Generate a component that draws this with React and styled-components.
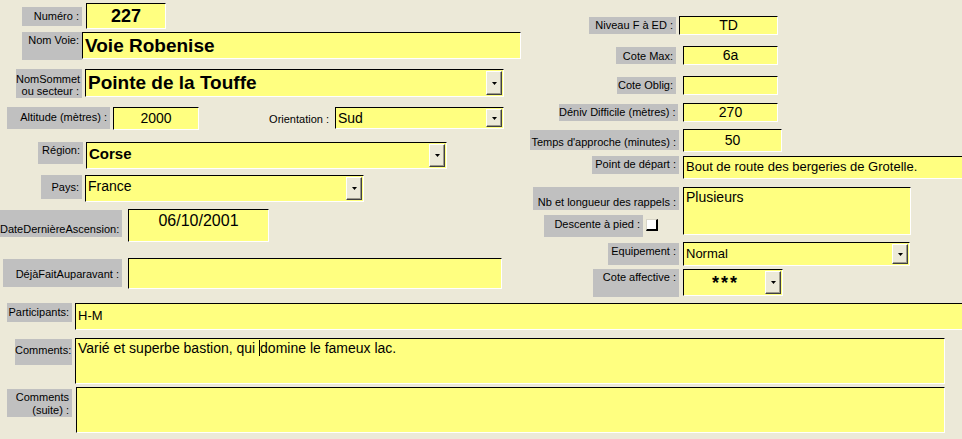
import React from 'react';
import styled, { createGlobalStyle } from 'styled-components';

const GlobalStyle = createGlobalStyle`
    body {
        margin: 0;
        background: #ece9d8;
        font-family: 'Liberation Sans', Arial, sans-serif;
    }
`;

const Form = styled.div`
    width: 962px;
    height: 439px;
    overflow: hidden;
    background: #ece9d8;
    color: #000;
`;

const Top = styled.div`
    display: flex;
    align-items: flex-start;
`;

const Column = styled.div`
    display: flex;
    flex-direction: column;
    width: ${p => p.$w}px;
    flex-shrink: 0;
`;

const Row = styled.div`
    display: flex;
    align-items: flex-start;
    margin-top: ${p => p.$mt || 0}px;
`;

const Stack = styled.div`
    display: flex;
    flex-direction: column;
    margin-left: ${p => p.$x || 0}px;
    width: ${p => p.$w}px;
    flex-shrink: 0;
`;

const Label = styled.div`
    box-sizing: border-box;
    flex-shrink: 0;
    margin-left: ${p => p.$x || 0}px;
    margin-top: ${p => p.$dy || 0}px;
    width: ${p => p.$w}px;
    height: ${p => p.$h}px;
    padding: ${p => p.$pt || 0}px 3px 0 0;
    background: #c0c0c0;
    font-size: 11px;
    line-height: ${p => p.$lh || 13}px;
    text-align: right;
    white-space: pre;
`;

const Caption = styled.div`
    flex-shrink: 0;
    margin-left: ${p => p.$x || 0}px;
    width: ${p => p.$w}px;
    height: ${p => p.$h}px;
    display: flex;
    align-items: center;
    justify-content: flex-end;
    font-size: 11px;
    white-space: nowrap;
`;

const Field = styled.div`
    box-sizing: border-box;
    flex-shrink: 0;
    display: flex;
    align-items: ${p => (p.$pt !== undefined ? 'flex-start' : 'center')};
    justify-content: ${p => (p.$center ? 'center' : 'flex-start')};
    margin-left: ${p => p.$x || 0}px;
    margin-top: ${p => p.$dy || 0}px;
    width: ${p => p.$w}px;
    height: ${p => p.$h}px;
    padding: ${p => p.$pt || 0}px ${p => (p.$combo ? 0 : 2)}px 0 2px;
    background: #ffff80;
    border-top: 1px solid #000;
    border-left: 1px solid #000;
    border-bottom: 1px solid #fff;
    border-right: 1px solid #fff;
    font-size: ${p => p.$fs || 14}px;
    font-weight: ${p => (p.$bold ? 700 : 400)};
    line-height: 1.15;
    white-space: nowrap;
    overflow: hidden;
`;

const Value = styled.span`
    flex: 1;
    text-align: ${p => (p.$center ? 'center' : 'left')};
    align-self: ${p => (p.$top ? 'flex-start' : 'center')};
    padding-top: ${p => p.$pt || 0}px;
    letter-spacing: ${p => p.$ls || 0}px;
    overflow: hidden;
`;

const DropButton = styled.div`
    box-sizing: border-box;
    align-self: stretch;
    width: 16px;
    margin: 1px 1px 1px 0;
    background: #ece9d8;
    border-top: 1px solid #fff;
    border-left: 1px solid #fff;
    border-right: 1px solid #404040;
    border-bottom: 1px solid #404040;
    box-shadow: inset -1px -1px 0 #9d9a8c;
    display: flex;
    align-items: center;
    justify-content: center;
`;

const Check = styled.div`
    box-sizing: border-box;
    flex-shrink: 0;
    width: 12px;
    height: 12px;
    margin-left: ${p => p.$x || 0}px;
    margin-top: ${p => p.$dy || 0}px;
    background: #fff;
    border-top: 1px solid #d8d5c8;
    border-left: 1px solid #d8d5c8;
    border-right: 2px solid #000;
    border-bottom: 2px solid #000;
`;

const Caret = styled.span`
    display: inline-block;
    width: 0;
    height: 16px;
    border-left: 1px solid #000;
    vertical-align: -3px;
`;

const Combo = ({ children, bold, fs, center, top, vpt, ls, ...rest }) => (
    <Field $combo {...rest}>
        <Value $center={center} $top={top} $pt={vpt} $ls={ls} style={{ fontSize: fs, fontWeight: bold ? 700 : 400 }}>
            {children}
        </Value>
        <DropButton>
            <svg width="5" height="3" viewBox="0 0 5 3">
                <polygon points="0,0 5,0 2.5,3" fill="#000" />
            </svg>
        </DropButton>
    </Field>
);

const App = () => {
    return (
        <Form>
            <GlobalStyle />
            <Top>
                <Column $w={525}>
                    <Row $mt={3}>
                        <Label $x={22} $w={60} $dy={4} $h={19} $pt={3}>Numéro :</Label>
                        <Field $x={4} $w={80} $h={26} $fs={18} $bold $center>227</Field>
                    </Row>
                    <Row $mt={3}>
                        <Label $x={22} $w={60} $h={28} $pt={2}>Nom Voie:</Label>
                        <Field $w={439} $h={27} $fs={19} $bold>Voie Robenise</Field>
                    </Row>
                    <Row $mt={9}>
                        <Label $x={16} $w={66} $h={29} $pt={4} $lh={12}>{'NomSommet\nou secteur :'}</Label>
                        <Combo $x={3} $w={419} $h={28} fs={19} bold>Pointe de la Touffe</Combo>
                    </Row>
                    <Row $mt={9}>
                        <Label $x={7} $w={103} $h={22} $pt={4}>Altitude (mètres) :</Label>
                        <Field $x={3} $w={86} $h={23} $center>2000</Field>
                        <Caption $x={66} $w={64} $h={23}>Orientation :</Caption>
                        <Combo $x={6} $w={169} $h={22} fs={14}>Sud</Combo>
                    </Row>
                    <Row $mt={12}>
                        <Label $x={38} $w={45} $h={22} $pt={2}>Région:</Label>
                        <Combo $x={3} $w={361} $h={27} fs={15} bold top vpt={2}>Corse</Combo>
                    </Row>
                    <Row $mt={6}>
                        <Label $x={41} $w={41} $h={24} $pt={6}>Pays:</Label>
                        <Combo $x={3} $w={279} $h={27} fs={14} top vpt={2}>France</Combo>
                    </Row>
                    <Row $mt={7}>
                        <Label $w={122} $h={27} $dy={1} $pt={13}>DateDernièreAscension:</Label>
                        <Field $x={6} $w={141} $h={33} $fs={16} $pt={2} $center>06/10/2001</Field>
                    </Row>
                    <Row $mt={16}>
                        <Label $x={3} $w={119} $h={28} $dy={1} $pt={9}>DéjàFaitAuparavant :</Label>
                        <Field $x={6} $w={374} $h={31} />
                    </Row>
                </Column>
                <Column $w={437}>
                    <Row $mt={16}>
                        <Label $x={64} $w={87} $dy={1} $h={17} $pt={2}>Niveau F à ED :</Label>
                        <Field $x={3} $w={99} $h={19} $center>TD</Field>
                    </Row>
                    <Row $mt={11}>
                        <Label $x={91} $w={60} $dy={1} $h={17} $pt={3}>Cote Max:</Label>
                        <Field $x={7} $w={95} $h={19} $center>6a</Field>
                    </Row>
                    <Row $mt={11}>
                        <Label $x={92} $w={59} $dy={1} $h={17} $pt={2}>Cote Oblig:</Label>
                        <Field $x={7} $w={95} $h={19} />
                    </Row>
                    <Row $mt={8}>
                        <Label $x={34} $w={119} $dy={1} $h={17} $pt={2}>Déniv Difficile (mètres) :</Label>
                        <Field $x={5} $w={95} $h={19} $center>270</Field>
                    </Row>
                    <Row $mt={7}>
                        <Label $x={5} $w={149} $dy={1} $h={20} $pt={6}>Temps d'approche (minutes) :</Label>
                        <Field $x={4} $w={99} $h={23} $center>50</Field>
                    </Row>
                    <Row $mt={4}>
                        <Label $x={67} $w={87} $h={18} $pt={2}>Point de départ :</Label>
                        <Field $x={4} $w={285} $h={23} $fs={13}>Bout de route des bergeries de Grotelle.</Field>
                    </Row>
                    <Row $mt={6}>
                        <Stack $x={8} $w={146}>
                            <Label $w={146} $dy={2} $h={23} $pt={9}>Nb et longueur des rappels :</Label>
                            <Row $mt={5}>
                                <Label $x={11} $w={99} $h={22} $pt={3}>Descente à pied :</Label>
                                <Check $x={3} $dy={4} />
                            </Row>
                        </Stack>
                        <Field $x={4} $dy={2} $w={228} $h={48} $pt={1}>Plusieurs</Field>
                    </Row>
                    <Row $mt={5}>
                        <Label $x={83} $w={71} $dy={1} $h={22} $pt={2}>Equipement :</Label>
                        <Combo $x={4} $w={227} $h={24} fs={13}>Normal</Combo>
                    </Row>
                    <Row $mt={3}>
                        <Label $x={68} $w={86} $h={28} $pt={2}>Cote affective :</Label>
                        <Combo $x={4} $w={100} $h={27} fs={18} bold center top vpt={3} ls={2}>***</Combo>
                    </Row>
                </Column>
            </Top>
            <Column $w={962}>
                <Row $mt={6}>
                    <Label $x={7} $w={65} $h={19} $pt={3}>Participants:</Label>
                    <Field $x={3} $w={900} $h={27} $fs={13}>H-M</Field>
                </Row>
                <Row $mt={8}>
                    <Label $x={15} $w={57} $dy={1} $h={26} $pt={5}>Comments:</Label>
                    <Field $x={3} $w={870} $h={46} $pt={1}>
                        <span>Varié et superbe bastion, qui <Caret />domine le fameux lac.</span>
                    </Field>
                </Row>
                <Row $mt={3}>
                    <Label $x={7} $w={65} $dy={2} $h={28} $pt={2} $lh={13}>{'Comments\n(suite) :'}</Label>
                    <Field $x={4} $w={869} $h={46} />
                </Row>
            </Column>
        </Form>
    );
};

export default App;
